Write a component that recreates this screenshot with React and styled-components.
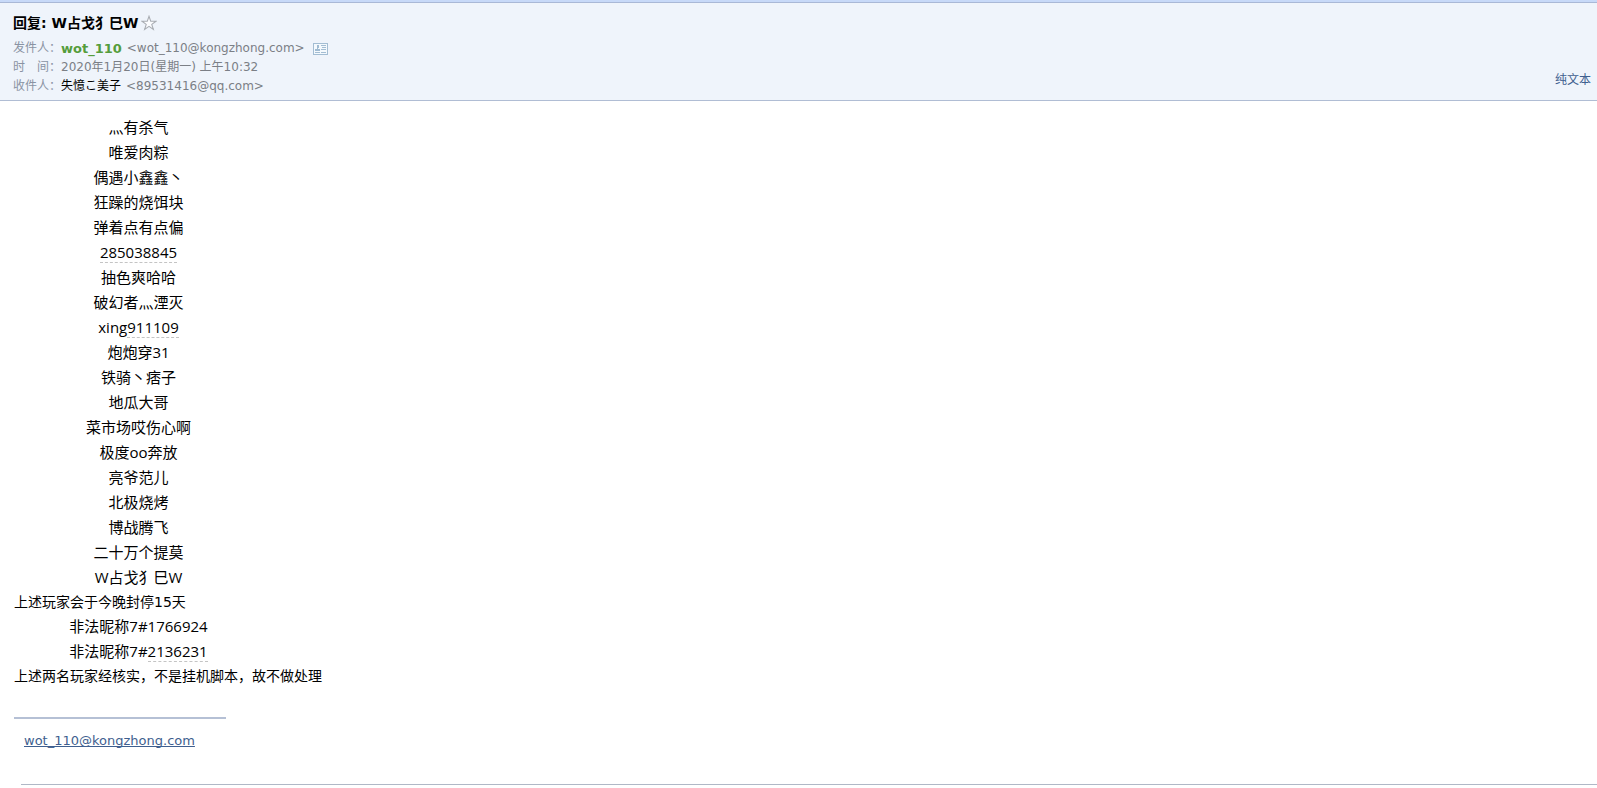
import React from 'react';
import styled, { createGlobalStyle } from 'styled-components';

const GlobalStyle = createGlobalStyle`
  body {
    margin: 0;
    background: #ffffff;
    font-family: "DejaVu Sans", "Noto Sans CJK SC", sans-serif;
    font-size: 12px;
    color: #000000;
  }
`;

const MailHeader = styled.header`
  display: flex;
  justify-content: space-between;
  align-items: flex-end;
  padding: 10px 6px 4px 13px;
  background: #eff4fb;
  border-bottom: 1px solid #b0bdd4;
`;

const TopBar = styled.div`
  height: 2px;
  background: #c7d9f8;
  border-bottom: 1px solid #a9b8d6;
`;

const Subject = styled.h1`
  display: flex;
  align-items: center;
  gap: 3px;
  margin: 0 0 6px;
  font-size: 14px;
  font-weight: 700;
  line-height: 20px;
`;

const IconButton = styled.button`
  display: flex;
  padding: 0;
  border: none;
  background: none;
  cursor: pointer;
`;

const MetaRow = styled.div`
  display: flex;
  align-items: center;
  line-height: 19px;
  color: #7b7f86;
`;

const Label = styled.span`
  width: 48px;
  color: #8a93a3;
`;

const Sender = styled.strong`
  margin-right: 5px;
  font-size: 13px;
  color: #559d3b;
`;

const Recipient = styled.span`
  margin-right: 5px;
  color: #000000;
`;

const CardButton = styled(IconButton)`
  margin-left: 8px;
`;

const PlainTextLink = styled.a`
  padding-bottom: 6px;
  line-height: 20px;
  color: #3f5f8f;
  text-decoration: none;
`;

const MailBody = styled.main`
  padding: 14px 0 0 14px;
`;

const NameTable = styled.table`
  width: 249px;
  border-collapse: collapse;
  font-family: "Open Sans", "Noto Sans CJK SC", sans-serif;
  font-size: 15px;
`;

const NameCell = styled.td`
  height: 25px;
  padding: 0;
  line-height: 24px;
  text-align: center;
  vertical-align: top;
`;

const PhoneLike = styled.span`
  display: inline-block;
  line-height: 20px;
  border-bottom: 1px dashed #c4c4c4;
`;

const Note = styled.p`
  margin: 0;
  font-size: 14px;
  line-height: 24px;
`;

const SignatureRule = styled.hr`
  width: 212px;
  height: 2px;
  margin: 29px 0 12px;
  border: none;
  background: #b5c0d5;
`;

const SignatureLink = styled.a`
  display: inline-block;
  margin-left: 10px;
  font-size: 13px;
  line-height: 20px;
  color: #3f5f8f;
  text-decoration-skip-ink: none;
`;

const EndRule = styled.hr`
  height: 1px;
  margin: 33px 0 0 7px;
  border: none;
  background: #b0b8c6;
`;

const players = [
  { name: '灬有杀气' },
  { name: '唯爱肉粽' },
  { name: '偶遇小鑫鑫丶' },
  { name: '狂躁的烧饵块' },
  { name: '弹着点有点偏' },
  { number: '285038845' },
  { name: '抽色爽哈哈' },
  { name: '破幻者灬湮灭' },
  { name: 'xing', number: '911109' },
  { name: '炮炮穿31' },
  { name: '铁骑丶痞子' },
  { name: '地瓜大哥' },
  { name: '菜市场哎伤心啊' },
  { name: '极度oo奔放' },
  { name: '亮爷范儿' },
  { name: '北极烧烤' },
  { name: '博战腾飞' },
  { name: '二十万个提莫' },
  { name: 'W占戈犭巳W' },
];

const illegalNames = [
  { name: '非法昵称7#1766924' },
  { name: '非法昵称7#', number: '2136231' },
];

function StarIcon() {
  return (
    <svg width="16" height="16" viewBox="0 0 15 15" fill="#fbfcfe" stroke="#a9adb3">
      <path d="M7.5 1.2L9.1 5.9H14L10.1 8.8L11.6 13.6L7.5 10.7L3.4 13.6L4.9 8.8L1 5.9H5.9Z" />
    </svg>
  );
}

function CardIcon() {
  return (
    <svg width="15" height="12" viewBox="0 0 15 12" fill="none">
      <rect x="0.5" y="0.5" width="14" height="11" fill="#f4f9fd" stroke="#a3bdd3" />
      <path d="M4 2h2v3H5v1h2v2H2V6h2z" fill="#a0bbd2" />
      <path d="M8 2.5h5M9 4.5h4M8 6.5h5M2 9.5h5M8 9.5h5" stroke="#a3bdd3" />
    </svg>
  );
}

function NameList({ rows }) {
  return (
    <NameTable>
      <tbody>
        {rows.map((row) => (
          <tr key={`${row.name}${row.number}`}>
            <NameCell>
              {row.name}
              {row.number && <PhoneLike>{row.number}</PhoneLike>}
            </NameCell>
          </tr>
        ))}
      </tbody>
    </NameTable>
  );
}

function App() {
  return (
    <>
      <GlobalStyle />
      <TopBar />
      <MailHeader>
        <div>
          <Subject>
            回复: W占戈犭巳W
            <IconButton type="button" aria-label="星标">
              <StarIcon />
            </IconButton>
          </Subject>
          <MetaRow>
            <Label>发件人：</Label>
            <Sender>wot_110</Sender>
            <span>&lt;wot_110@kongzhong.com&gt;</span>
            <CardButton type="button" aria-label="联系人">
              <CardIcon />
            </CardButton>
          </MetaRow>
          <MetaRow>
            <Label>时　间：</Label>
            <span>2020年1月20日(星期一) 上午10:32</span>
          </MetaRow>
          <MetaRow>
            <Label>收件人：</Label>
            <Recipient>失憶こ美子</Recipient>
            <span>&lt;89531416@qq.com&gt;</span>
          </MetaRow>
        </div>
        <PlainTextLink href="#plain">纯文本</PlainTextLink>
      </MailHeader>
      <MailBody>
        <NameList rows={players} />
        <Note>上述玩家会于今晚封停15天</Note>
        <NameList rows={illegalNames} />
        <Note>上述两名玩家经核实，不是挂机脚本，故不做处理</Note>
        <SignatureRule />
        <SignatureLink href="mailto:wot_110@kongzhong.com">wot_110@kongzhong.com</SignatureLink>
        <EndRule />
      </MailBody>
    </>
  );
}

export default App;
